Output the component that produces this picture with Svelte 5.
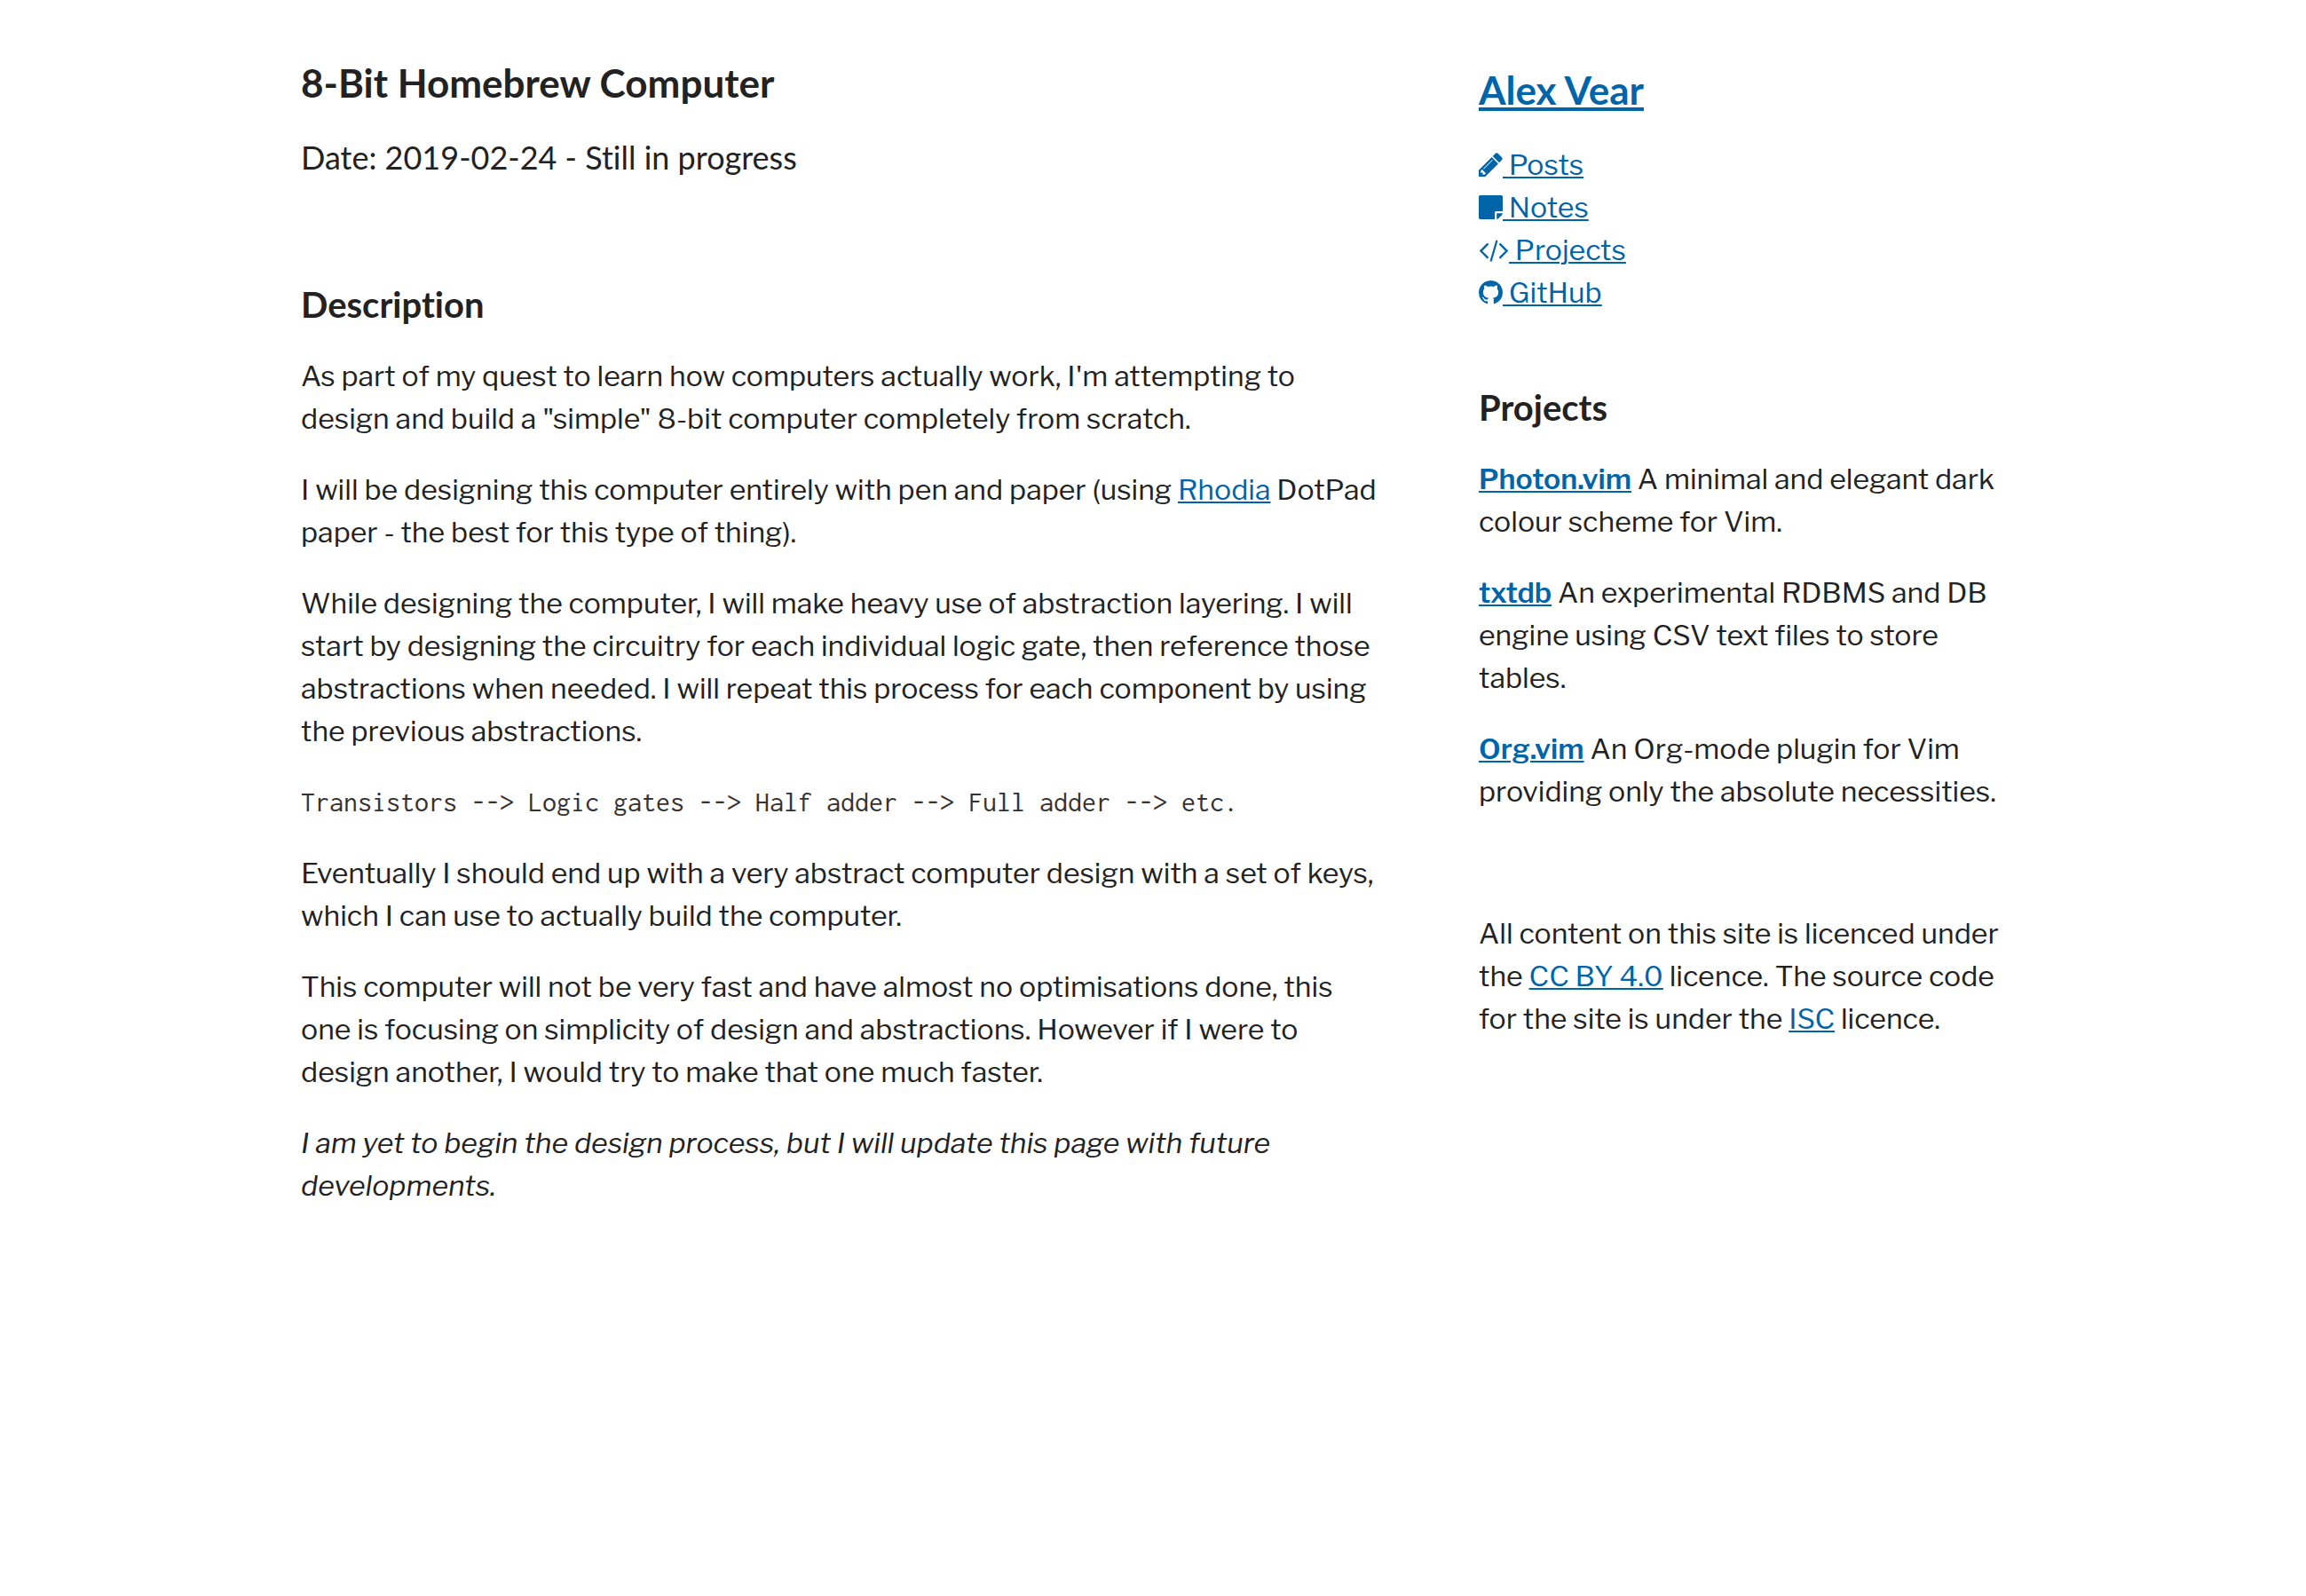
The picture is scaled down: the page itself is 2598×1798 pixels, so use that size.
<script>
  const links = [
    {
      label: 'Posts',
      width: 27,
      viewBox: '128 128 1536 1536',
      path: 'M491 1536l91-91-235-235-91 91v107h128v128h107zm523-928q0-22-22-22-10 0-17 7l-542 542q-7 7-7 17 0 22 22 22 10 0 17-7l542-542q7-7 7-17zm-54-192l416 416-832 832h-416v-416zm683 96q0 53-37 90l-166 166-416-416 166-165q36-38 90-38 53 0 91 38l235 234q37 39 37 91z'
    },
    {
      label: 'Notes',
      width: 27,
      viewBox: '128 128 1536 1536',
      path: 'M1152 1248v416h-928q-40 0-68-28t-28-68v-1344q0-40 28-68t68-28h1344q40 0 68 28t28 68v928h-416q-40 0-68 28t-28 68zm128 32h381q-15 82-65 132l-184 184q-50 50-132 65v-381z'
    },
    {
      label: 'Projects',
      width: 34,
      viewBox: '-64 128 1920 1536',
      path: 'M553 1399l-50 50q-10 10-23 10t-23-10l-466-466q-10-10-10-23t10-23l466-466q10-10 23-10t23 10l50 50q10 10 10 23t-10 23l-393 393 393 393q10 10 10 23t-10 23zm591-1067l-373 1291q-4 13-15.500 19.500t-23.500 2.500l-62-17q-13-4-19.500-15.500t-2.500-24.500l373-1291q4-13 15.500-19.500t23.500-2.500l62 17q13 4 19.500 15.500t2.500 24.500zm657 651l-466 466q-10 10-23 10t-23-10l-50-50q-10-10-10-23t10-23l393-393-393-393q-10-10-10-23t10-23l50-50q10-10 23-10t23 10l466 466q10 10 10 23t-10 23z'
    },
    {
      label: 'GitHub',
      width: 27,
      viewBox: '128 128 1536 1536',
      path: 'M896 128q209 0 385.500 103t279.500 279.500 103 385.500q0 251-146.500 451.500t-378.500 277.500q-27 5-40-7t-13-30q0-3 .5-76.500t.5-134.500q0-97-52-142 57-6 102.500-18t94-39 81-66.500 53-105 20.500-150.500q0-119-79-206 37-91-8-204-28-9-81 11t-92 44l-38 24q-93-26-192-26t-192 26q-16-11-42.500-27t-83.500-38.500-85-13.500q-45 113-8 204-79 87-79 206 0 85 20.500 150t52.500 105 80.500 67 94 39 102.500 18q-39 36-49 103-21 10-45 15t-57 5-65.500-21.500-55.500-62.500q-19-32-48.500-52t-49.500-24l-20-3q-21 0-29 4.500t-5 11.500 9 14 13 12l7 5q22 10 43.500 38t31.500 51l10 23q13 38 44 61.500t67 30 69.500 7 55.500-3.500l23-4q0 38 .5 88.500t.5 54.500q0 18-13 30t-40 7q-232-77-378.500-277.500t-146.500-451.500q0-209 103-385.500t279.500-279.500 385.500-103z'
    }
  ];

  const projects = [
    { name: 'Photon.vim', text: 'A minimal and elegant dark colour scheme for Vim.' },
    { name: 'txtdb', text: 'An experimental RDBMS and DB engine using CSV text files to store tables.' },
    { name: 'Org.vim', text: 'An Org-mode plugin for Vim providing only the absolute necessities.' }
  ];
</script>

<div class="page">
  <main>
    <header>
      <h1>8-Bit Homebrew Computer</h1>
      <p class="date">Date: 2019-02-24 - Still in progress</p>
    </header>

    <section>
      <h2>Description</h2>
      <p>As part of my quest to learn how computers actually work, I'm attempting to design and build a "simple" 8-bit computer completely from scratch.</p>
      <p>I will be designing this computer entirely with pen and paper (using <a href="#rhodia">Rhodia</a> DotPad paper - the best for this type of thing).</p>
      <p>While designing the computer, I will make heavy use of abstraction layering. I will start by designing the circuitry for each individual logic gate, then reference those abstractions when needed. I will repeat this process for each component by using the previous abstractions.</p>
      <pre><code>Transistors --&gt; Logic gates --&gt; Half adder --&gt; Full adder --&gt; etc.</code></pre>
      <p>Eventually I should end up with a very abstract computer design with a set of keys, which I can use to actually build the computer.</p>
      <p>This computer will not be very fast and have almost no optimisations done, this one is focusing on simplicity of design and abstractions. However if I were to design another, I would try to make that one much faster.</p>
      <p><em>I am yet to begin the design process, but I will update this page with future developments.</em></p>
    </section>
  </main>

  <aside>
    <h1><a href="#home">Alex Vear</a></h1>
    <nav>
      <ul>
        {#each links as link}
          <li>
            <a href="#{link.label.toLowerCase()}"><svg width={link.width} height="27" viewBox={link.viewBox} aria-hidden="true"><path d={link.path} /></svg> {link.label}</a>
          </li>
        {/each}
      </ul>
    </nav>

    <section class="projects">
      <h2>Projects</h2>
      {#each projects as project}
        <p><a href="#{project.name}"><strong>{project.name}</strong></a> {project.text}</p>
      {/each}
    </section>

    <footer>
      <p>All content on this site is licenced under the <a href="#cc-by">CC BY 4.0</a> licence. The source code for the site is under the <a href="#isc">ISC</a> licence.</p>
    </footer>
  </aside>
</div>

<style>
  :global(body) {
    margin: 0;
    background: #fff;
  }

  .page {
    display: grid;
    grid-template-columns: minmax(0, 1223fr) minmax(0, 593fr);
    column-gap: 104px;
    max-width: 1920px;
    margin: 0 auto;
    padding-bottom: 96px;
    color: #222;
    font: 400 32px/48px 'Libre Franklin', 'Open Sans', sans-serif;
  }

  main {
    padding-top: 69px;
  }

  aside {
    padding-top: 77px;
  }

  h1,
  h2,
  .date {
    font-family: Lato, sans-serif;
    font-variant-ligatures: none;
  }

  h1,
  h2 {
    margin: 0;
    font-weight: 700;
  }

  h1 {
    font-size: 44px;
    line-height: 48px;
  }

  h2 {
    font-size: 40px;
    line-height: 50px;
  }

  p,
  pre {
    margin: 32px 0 0;
  }

  .date {
    margin-top: 36px;
    font-size: 36px;
  }

  main section {
    margin-top: 117px;
  }

  pre,
  code {
    color: #333;
    font: 400 32px/48px Inconsolata, 'Liberation Mono', monospace;
  }

  a {
    color: #0065a8;
    text-decoration: underline;
    text-decoration-thickness: 2px;
    text-underline-offset: 2px;
  }

  h1 a {
    text-decoration-thickness: 4px;
    text-underline-offset: 3px;
  }

  strong {
    font-weight: 600;
  }

  ul {
    margin: 37px 0 0;
    padding: 0;
    list-style: none;
  }

  svg {
    vertical-align: -2px;
    fill: currentColor;
  }

  .projects {
    margin-top: 80px;
  }

  footer {
    margin-top: 112px;
  }

  footer p {
    margin: 0;
  }

  @media (max-width: 1100px) {
    .page {
      grid-template-columns: minmax(0, 1fr);
      padding: 0 32px 64px;
    }
  }
</style>
